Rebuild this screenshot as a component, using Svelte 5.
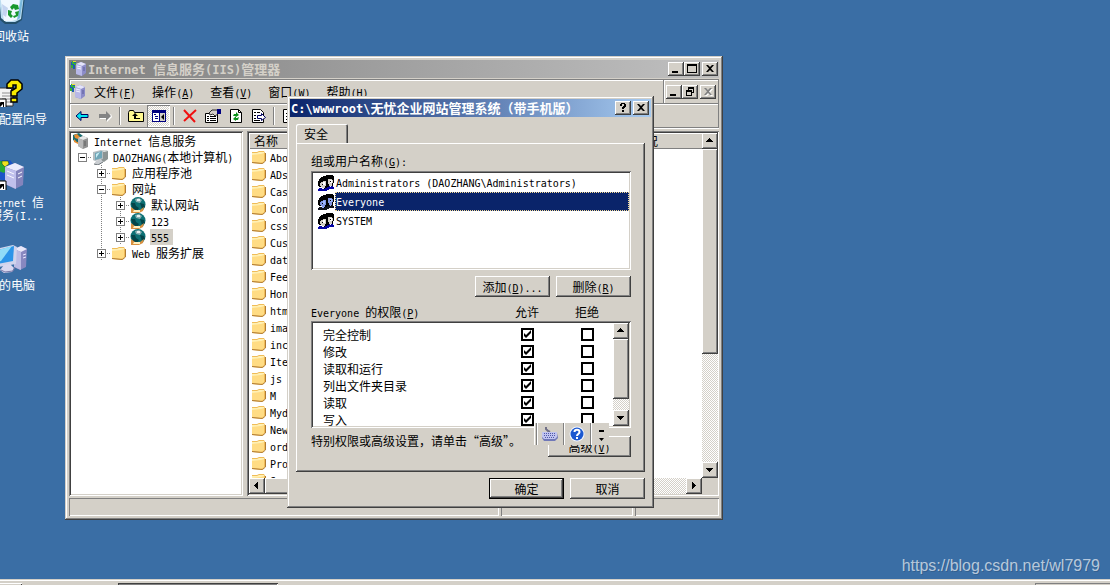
<script>
  const menus = ['文件(&F)', '操作(&A)', '查看(&V)', '窗口(&W)', '帮助(&H)'];
  const tools = ['back', 'forward', '|', 'up', 'tree', '|', 'delete', 'props', 'refresh', 'export', '|', 'help'];
  const tree = [
    { level: 0, icon: 'iis', name: 'Internet 信息服务' },
    { level: 1, icon: 'server', name: 'DAOZHANG(本地计算机)', sign: '-' },
    { level: 2, icon: 'folder', name: '应用程序池', sign: '+' },
    { level: 2, icon: 'folder', name: '网站', sign: '-' },
    { level: 3, icon: 'globe', name: '默认网站', sign: '+' },
    { level: 3, icon: 'globe', name: '123', sign: '+' },
    { level: 3, icon: 'globe', name: '555', sign: '+', selected: true },
    { level: 2, icon: 'folder', name: 'Web 服务扩展', sign: '+' }
  ];
  const files = ['Abo', 'ADs', 'Cas', 'Con', 'css', 'Cus', 'dat', 'Fee', 'Hon', 'htm', 'ima', 'inc', 'Ite', 'js', 'M', 'Myd', 'New', 'ord', 'Pro', 'S'];
  const users = ['Administrators (DAOZHANG\\Administrators)', 'Everyone', 'SYSTEM'];
  const shortcuts = [
    { icon: 'bin', lines: ['回收站'] },
    { icon: 'wizard', lines: ['安全配置向导'] },
    { icon: 'iisBig', lines: ['Internet 信', '息服务(I...'] },
    { icon: 'computer', lines: ['我的电脑'] }
  ];
  let selected = $state('Everyone');
  let perms = $state(
    ['完全控制', '修改', '读取和运行', '列出文件夹目录', '读取', '写入'].map((name) => ({ name, allow: true, deny: false }))
  );

  // Splits a label into Latin and Chinese runs; "&" marks the access key.
  function runs(text) {
    return (text.match(/&.|[\x20-\x25\x27-\x7e]+|[^\x20-\x7e]+/g) ?? []).map((s) => {
      if (s[0] === '&') return { s: s[1], kind: 'lat key' };
      return { s, kind: s.charCodeAt(0) < 127 ? 'lat' : 'han' };
    });
  }
</script>

{#snippet t(text)}<span class="t">{#each runs(text) as r}<span class={r.kind}>{r.s}</span>{/each}</span>{/snippet}

{#snippet boxServer()}
  <path d="M5 3l5-2 5 2v9l-4 3-6-2z" fill="#8c8cc8" />
  <path d="M5 3l5-2 5 2-4 2z" fill="#e4e4fa" />
  <path d="M5 3l6 2v10l-6-2z" fill="#b8b8e6" />
  <path d="M6 5l4 1M6 7l4 1" stroke="#f4f4ff" stroke-width="1" />
  <path d="M12 7h2M12 9h2" stroke="#5c5c9c" />
  <path d="M0 1h5v3H4v4H2V6H0z" fill="#1c5cb4" />
  <path d="M1 0h2v2h2v2H3V3H1zM0 4h2v3H0z" fill="#38b038" />
  <path d="M2 0h3v1H2z" fill="#f0dc30" />
{/snippet}

{#snippet icon(name)}
  {#if name === 'folder'}
    <svg class="i16" viewBox="0 0 16 16" aria-hidden="true">
      <path d="M1 3h5l2-1h5l1 2v8l-3 3-10-1z" fill="#f0bc58" />
      <path d="M1 4h5l2-1h5v9l-3 1-9-1z" fill="#fff0b4" />
      <path d="M1 6l9-1 3-1v8l-3 2-9-1z" fill="#ffdc84" />
      <path d="M14.500 4v8l-3 2.500L1 13.500" fill="none" stroke="#b07c34" />
    </svg>
  {:else if name === 'globe'}
    <svg class="i16" viewBox="0 0 16 16" aria-hidden="true">
      <circle cx="8" cy="7.500" r="7.500" fill="#0c7074" />
      <path d="M1 6h4l1 3 3 2-2 3-4-2zM10 6l4 1 1 3-3 2z" fill="#044448" />
      <path d="M5 2l4-1 3 2-2 3-4-1z" fill="#8cb0b4" />
      <path d="M7 2h3v2H7z" fill="#e4f0f0" />
      <path d="M1 10l4 3h5l4-3-1 4-4 2H1z" fill="#d89040" />
      <path d="M4 13h6v2H3z" fill="#fff0c0" />
    </svg>
  {:else if name === 'server'}
    <svg class="i16" viewBox="0 0 16 16" aria-hidden="true">
      <path d="M9 2l4-1 3 1v8l-4 3-3-1z" fill="#8c9494" />
      <path d="M9 2l4-1 3 1-4 1z" fill="#e0e4e4" />
      <path d="M1 3l8-2 2 1v8l-8 2-2-1z" fill="#b4bcc0" />
      <path d="M3 4l7-2v7l-7 2z" fill="#6ea6b8" />
      <path d="M4 5l4-2-4 6z" fill="#c8ecf4" />
      <path d="M4 12l5-2 2 3-5 3-4-1z" fill="#c8ccd0" />
      <path d="M2 15l4 1 5-3" fill="none" stroke="#6c7478" />
    </svg>
  {:else if name === 'iis'}
    <svg class="i16" viewBox="0 0 16 16" aria-hidden="true">
      <path d="M0 2l6-2 4 3-1 6-5 1-4-3z" fill="#186c70" />
      <path d="M1 2l3-1 3 3-2 2-3-1zM1 6l3 3h2l-1 2-4-2z" fill="#e88c30" />
      <path d="M5 5l5-2 5 2v9l-5 2-5-3z" fill="#909090" />
      <path d="M5 5l5-2 5 2-5 2z" fill="#e8e8e8" />
      <path d="M5 5l5 2v9l-5-3z" fill="#b8b8b8" />
      <path d="M12 8v5" stroke="#606060" />
    </svg>
  {:else if name === 'iisApp'}
    <svg class="i16" viewBox="0 0 16 16" aria-hidden="true">{@render boxServer()}</svg>
  {:else if name === 'users'}
    <svg class="i16" viewBox="0 0 16 16" aria-hidden="true">
      <path d="M3 2h2V1h3V0h7v1h1v7h-1v3h-2v2H9v1H4v-2H1v-1H0V6h1V4h1V3h1z" fill="#000" />
      <path d="M10 4h4v1h1v3h-1v3h-3V9h-1zM2 8h1V7h2V6h3v5H7v2H4v-1H3v-1H2z" fill="#d4d0c8" />
      <path d="M12 5h2v3h-2zM5 7h2v3H5z" fill="#fff" />
      <path d="M12 6h1v1h-1zM4 9h1v1H4zM8 6h1v5H8z" fill="#000" />
      <path d="M0 14h1v-1h3v1h3v-1h2v-1h2v-1h4v1h1v2h-5v1H9v1H0z" fill="#0404a4" />
      <path d="M4 13h2v1H4zM12 11h1v1h-1z" fill="#f4f4ff" />
    </svg>
  {:else if name === 'back'}
    <svg class="i16" viewBox="0 0 16 16" aria-hidden="true"><path d="M2 8l5-4.500V6.500h7v3H7v3z" fill="#00e4f0" stroke="#000060" /></svg>
  {:else if name === 'forward'}
    <svg class="i16" viewBox="0 0 16 16" aria-hidden="true"><path d="M15 9l-5 5v-3H3v-1h7l4-4z" fill="#fff" /><path d="M14 8L9 3v3H2v4h7v3z" fill="#848484" /></svg>
  {:else if name === 'up'}
    <svg class="i16" viewBox="0 0 16 16" aria-hidden="true"><path d="M.5 13.500v-9l1-2h4l1 2h9v9z" fill="#fff890" stroke="#000" /><path d="M4 8l3-3 3 3H8v2h4v1H6V8z" fill="#000" /></svg>
  {:else if name === 'tree'}
    <svg class="i16" viewBox="0 0 16 16" aria-hidden="true"><path d="M1 2h14v12H1z" fill="#000080" /><path d="M2 5h6v8H2z" fill="#fff" /><path d="M9 5h5v8H9z" fill="#d4d0c8" /><path d="M3 6h2v1H3zM4 8h3v1H4zM4 10h3v1H4z" fill="#000080" /><path d="M13 6v6l-3-3z" fill="#000" /></svg>
  {:else if name === 'delete'}
    <svg class="i16" viewBox="0 0 16 16" aria-hidden="true"><path d="M2 2l11 12M14 2L2 13" stroke="#f01010" stroke-width="2" fill="none" /></svg>
  {:else if name === 'props'}
    <svg class="i16" viewBox="0 0 16 16" aria-hidden="true"><path d="M.5 5.500h12v9H.5z" fill="#fff" stroke="#000" /><path d="M2 8h2v1H2zM5 8h6v1H5zM2 10h2v1H2zM5 10h6v1H5zM2 12h2v1H2zM5 12h6v1H5z" fill="#000" /><path d="M4 5l3-3h6v4l-3 2-2-2-3 1z" fill="#d4d0c8" stroke="#000" stroke-width=".8" /><path d="M12 1h4v5h-4z" fill="#000080" /></svg>
  {:else if name === 'refresh'}
    <svg class="i16" viewBox="0 0 16 16" aria-hidden="true"><path d="M2.500 1.500h8l3 3v10h-11z" fill="#fff" stroke="#000" /><path d="M10.500 1.500v3h3" fill="none" stroke="#000" /><path d="M5 8l1-2h2V4l3 3-3 2V8H7zM11 9l-1 3H8v1l-3-2 3-3v2h1z" fill="#089018" /></svg>
  {:else if name === 'export'}
    <svg class="i16" viewBox="0 0 16 16" aria-hidden="true"><path d="M1.500 1.500h8l3 3v10h-11z" fill="#fff" stroke="#000" /><path d="M3 4h2v1H3zM6 4h3v1H6zM3 7h2v1H3zM3 10h2v1H3zM3 12h6v1H3z" fill="#000" /><path d="M6.500 7.500h4v-2l4 4-4 3v-2h-4z" fill="#fff" stroke="#000060" /></svg>
  {:else if name === 'help'}
    <svg class="i16" viewBox="0 0 16 16" aria-hidden="true"><path d="M1.500 1.500h13v13h-13z" fill="#fff" stroke="#000" /><path d="M4 5h3v1H4zM4 8h3v1H4zM4 11h3v1H4z" fill="#000" /></svg>
  {:else if name === 'bin'}
    <svg class="i32" viewBox="0 0 32 32" aria-hidden="true">
      <path d="M3 4h27l-3 24-6 4H10l-5-4z" fill="#24506c" />
      <path d="M4 3h25l-3 24-6 3h-9l-5-4z" fill="#bcdcf0" />
      <path d="M5 3l8 5 12-5-2 24-6 2H9z" fill="#f0f8ff" />
      <path d="M7 12l6 4-2 9-3-2z" fill="#c4d4f0" />
      <path d="M26 6h2l-3 20-3 2z" fill="#78b8dc" />
      <path d="M15 15l3-3 5 1 1 4-4 1-1-2-2 2zM24 19l-1 5-4 2-1-2 3-1-1-3zM13 18l4 1-1 3 2 2-2 2-3-3z" fill="#18982c" />
    </svg>
  {:else if name === 'wizard'}
    <svg class="i32" viewBox="0 0 32 32" aria-hidden="true">
      <path d="M2 13h13l3 3v15H2z" fill="#f4f4f4" stroke="#303030" />
      <path d="M7 18h9M7 21h9M7 24h9M7 27h9" stroke="#909090" />
      <path d="M12 13V9l4-4h7l4 4v5l-5 4v3h-6v-5l5-3v-3h-3v3zM16 23h6v4h-6z" fill="#f8ec00" stroke="#000" stroke-width="1.500" />
      <path d="M0 24h11v11H0z" fill="#fff" stroke="#000" /><path d="M5 32v-3H2l4-2h3v5H8v-3z" fill="#000" />
    </svg>
  {:else if name === 'iisBig'}
    <svg class="i32" viewBox="0 0 32 32" aria-hidden="true">
      <path d="M1 4l7-2h7l3 4v12l-6 5-9-2z" fill="#1c54c8" />
      <path d="M4 3h5v4l4 3-4 5-5-2zM12 12l4 2-3 5z" fill="#28a838" /><path d="M7 3h6l1 3-4 3-3-3z" fill="#f0e020" stroke="#205020" stroke-width=".6" />
      <path d="M10 9l10-4 9 4-1 18-8 4-10-5z" fill="#8484bc" />
      <path d="M10 9l10-4 9 4-8 4z" fill="#ececfc" />
      <path d="M10 9l11 4v18l-11-5z" fill="#c0c0ec" />
      <path d="M12 13l7 3M12 17l7 3M23 16l4-2M23 20l4-2" stroke="#f8f8ff" />
      <path d="M0 23h11v11H0z" fill="#fff" stroke="#000" /><path d="M5 31v-3H2l4-2h3v5H8v-3z" fill="#000" />
    </svg>
  {:else if name === 'computer'}
    <svg class="i32" viewBox="0 0 32 32" aria-hidden="true">
      <path d="M19 8l7-3 6 3-1 18-6 3-6-3z" fill="#8888c0" />
      <path d="M19 8l7-3 6 3-6 3z" fill="#e8e8fa" />
      <path d="M19 8l7 3v18l-7-3z" fill="#bcbce4" /><path d="M28 14l3-1M28 17l3-1" stroke="#e8e8ff" />
      <path d="M1 8l17-4 4 2-1 17-18 3z" fill="#d0d4ec" />
      <path d="M3 9l16-4-1 15-15 3z" fill="#2c94e8" />
      <path d="M3 9l14-4L6 20l-3 1z" fill="#90dcf8" />
      <path d="M9 24l6-1 4 4-2 4-8 1-4-3z" fill="#d8d8f0" /><path d="M6 29l4 2 8-1 2-4" fill="none" stroke="#7878a8" />
    </svg>
  {/if}
{/snippet}

{#snippet glyph(kind)}
  <svg class="glyph" viewBox="0 0 12 10" aria-hidden="true">
    {#if kind === 'min'}<path d="M2 7h6v2H2z" />
    {:else if kind === 'max'}<path d="M1 0h10v9H1zM2 2v6h8V2z" fill-rule="evenodd" />
    {:else if kind === 'restore'}<path d="M4 0h6v6H8v3H2V3h2zM5 2v1h3v2h1V2zM3 5v3h4V5z" fill-rule="evenodd" />
    {:else if kind === 'close'}<path d="M2 1h2l2 2 2-2h2L7 4.500 10 8H8L6 6 4 8H2l3-3.500z" />
    {:else if kind === 'off'}<path d="M3 2h2l2 2 2-2h2L8 5.500 11 9H9L7 7 5 9H3l3-3.500z" fill="#fff" /><path d="M2 1h2l2 2 2-2h2L7 4.500 10 8H8L6 6 4 8H2l3-3.500z" fill="#808080" />
    {:else if kind === 'ask'}<path d="M3 1h1V0h4v1h1v3H8v1H7v1H5V4h1V3h1V1H5v2H3zM5 7h2v2H5z" />
    {/if}
  </svg>
{/snippet}

{#snippet arrow(dir)}
  <button class="raised arrow" type="button" aria-label={dir}>
    <svg viewBox="0 0 16 16" aria-hidden="true">
      {#if dir === 'up'}<path d="M4 9h7v-1h-1v-1H9V6H8V5H7v1H6v1H5v1H4z" />
      {:else if dir === 'down'}<path d="M4 6h7v1h-1v1H9v1H8v1H7V9H6V8H5V7H4z" />
      {:else if dir === 'left'}<path d="M9 4v7H8v-1H7V9H6V8H5V7h1V6h1V5h1V4z" />
      {:else}<path d="M6 4v7h1v-1h1V9h1V8h1V7H9V6H8V5H7V4z" />{/if}
    </svg>
  </button>
{/snippet}

<div class="screen">
  <main class="desktop">
    <nav class="shortcuts">
      {#each shortcuts as s}
        <a class="shortcut" href="#desktop">
          {@render icon(s.icon)}
          <span class="caption">{#each s.lines as line}{@render t(line)}{/each}</span>
        </a>
      {/each}
    </nav>

    <section class="window console">
      <header class="title dim">
        {@render icon('iisApp')}
        <h1>{@render t('Internet 信息服务(IIS)管理器')}</h1>
        <button class="raised cap" type="button" aria-label="最小化">{@render glyph('min')}</button>
        <button class="raised cap" type="button" aria-label="最大化">{@render glyph('max')}</button>
        <button class="raised cap last" type="button" aria-label="关闭">{@render glyph('close')}</button>
      </header>

      <div class="bars">
        <div class="band">
          <div class="menu">
            {@render icon('iisApp')}
            {#each menus as m}<button class="item" type="button">{@render t(m)}</button>{/each}
          </div>
          <div class="mdi">
            <button class="raised cap" type="button" aria-label="最小化">{@render glyph('min')}</button>
            <button class="raised cap" type="button" aria-label="还原">{@render glyph('restore')}</button>
            <button class="raised cap last" type="button" aria-label="关闭" disabled>{@render glyph('off')}</button>
          </div>
        </div>
        <div class="band tools">
          {#each tools as name}
            {#if name === '|'}<span class="sep"></span>
            {:else}<button class="tool" class:down={name === 'tree'} type="button" aria-label={name}>{@render icon(name)}</button>{/if}
          {/each}
        </div>
      </div>

      <div class="panes">
        <ul class="sunken tree">
          {#each tree as n}
            <li class={['node', 'l' + n.level]}>
              {#if n.sign}<span class="twig"><button class="sign" class:plus={n.sign === '+'} type="button" aria-label={n.name}></button></span>{/if}
              {@render icon(n.icon)}
              <span class="name" class:sel={n.selected}>{@render t(n.name)}</span>
            </li>
          {/each}
        </ul>
        <div class="sunken list">
          <div class="view">
            <table>
              <thead><tr><th>{@render t('名称')}</th><th>{@render t('状况')}</th></tr></thead>
              <tbody>
                {#each files as f}<tr><td>{@render icon('folder')}{@render t(f)}</td></tr>{/each}
              </tbody>
            </table>
          </div>
          <div class="vbar">{@render arrow('up')}<span class="raised thumb tall"></span><span class="rest"></span>{@render arrow('down')}</div>
          <div class="hbar">{@render arrow('left')}<span class="raised thumb wide"></span><span class="rest"></span>{@render arrow('right')}</div>
          <span class="corner"></span>
        </div>
      </div>

      <footer class="status"><span></span><span></span><span></span></footer>
    </section>

    <section class="window dialog">
      <header class="title">
        <h2>{@render t('C:\\wwwroot\\无忧企业网站管理系统（带手机版）')}</h2>
        <button class="raised cap" type="button" aria-label="帮助">{@render glyph('ask')}</button>
        <button class="raised cap last" type="button" aria-label="关闭">{@render glyph('close')}</button>
      </header>
      <div class="body">
        <button class="tab" type="button">{@render t('安全')}</button>
        <div class="page">
          <span class="label" id="users">{@render t('组或用户名称(&G):')}</span>
          <ul class="sunken users" role="listbox" aria-labelledby="users">
            {#each users as u}
              <li role="option" aria-selected={selected === u} class:on={selected === u}>
                <button type="button" onclick={() => (selected = u)}>{@render icon('users')}<span class="who">{@render t(u)}</span></button>
              </li>
            {/each}
          </ul>
          <div class="actions">
            <button class="raised push" type="button">{@render t('添加(&D)...')}</button>
            <button class="raised push" type="button">{@render t('删除(&R)')}</button>
          </div>
          <div class="heads" id="perms">
            <span>{@render t('Everyone 的权限(&P)')}</span>
            <span class="col">{@render t('允许')}</span>
            <span class="col">{@render t('拒绝')}</span>
          </div>
          <div class="sunken perms">
            <table aria-labelledby="perms">
              <tbody>
                {#each perms as p}
                  <tr>
                    <th scope="row">{@render t(p.name)}</th>
                    <td><input type="checkbox" aria-label={p.name + ' 允许'} bind:checked={p.allow} /></td>
                    <td><input type="checkbox" aria-label={p.name + ' 拒绝'} bind:checked={p.deny} /></td>
                  </tr>
                {/each}
              </tbody>
            </table>
            <div class="vbar">{@render arrow('up')}<span class="raised thumb short"></span><span class="rest"></span>{@render arrow('down')}</div>
          </div>
          <div class="more">
            <span>{@render t('特别权限或高级设置，请单击“高级”。')}</span>
            <button class="raised push" type="button">{@render t('高级(&V)')}</button>
          </div>
        </div>
        <div class="answer">
          <button class="raised push default" type="button">{@render t('确定')}</button>
          <button class="raised push" type="button">{@render t('取消')}</button>
        </div>
      </div>
    </section>

    <div class="langbar">
      <button type="button" aria-label="键盘">
        <svg class="i20" viewBox="0 0 20 20" aria-hidden="true">
          <path d="M6 3v2l2 2 2 1" fill="none" stroke="#707088" stroke-width="2" />
          <path d="M2 9h15l1 5-3 3H4l-2-3z" fill="#7078b8" />
          <path d="M2 8h15v5l-2 2H4l-2-2z" fill="#c0c4f0" />
          <path d="M4 9.500h12M4 11.500h12M5 13.500h10" stroke="#5058a8" stroke-dasharray="1 1" />
        </svg>
      </button>
      <button type="button" aria-label="帮助">
        <svg class="i20" viewBox="0 0 20 20" aria-hidden="true">
          <circle cx="10" cy="10" r="7.500" fill="#f4f8ff" /><circle cx="10" cy="10" r="6.500" fill="#1c58d0" />
          <path d="M7.500 8c0-3 5-3 5 0 0 2-2.500 2-2.500 4" fill="none" stroke="#fff" stroke-width="2" /><path d="M9 13h2v2H9z" fill="#fff" />
        </svg>
      </button>
      <button class="grip" type="button" aria-label="选项">
        <svg class="i20" viewBox="0 0 20 20" aria-hidden="true"><path d="M8 6h5v2H8zM8 14h5l-2.500 3z" /></svg>
      </button>
    </div>

    <p class="mark">https://blog.csdn.net/wl7979</p>
  </main>

  <footer class="taskbar">
    <span class="start"></span>
    <span class="task"></span>
    <span class="tray"></span>
  </footer>
</div>

<style>
  :global(body) { background: #3a6ea5; }
  * { box-sizing: border-box; }
  .screen {
    display: flex; flex-direction: column; height: 100vh; overflow: hidden;
    font: 12px/16px "Noto Sans CJK SC", sans-serif; color: #000;
    --face: #d4d0c8; --dither: repeating-conic-gradient(#fff 0 25%, #d4d0c8 0 50%) 0 0 / 2px 2px;
  }
  button { font: inherit; color: inherit; border: 0; padding: 0; margin: 0; background: none; }
  ul { list-style: none; margin: 0; padding: 0; }
  h1, h2, p { margin: 0; font: inherit; }
  table { border-collapse: collapse; }
  th, td { padding: 0; font-weight: normal; text-align: left; }
  svg { display: block; flex: none; }
  .t { white-space: pre; }
  .lat { font-family: "DejaVu Sans Mono", monospace; font-size: 10px; line-height: 10px; }
  .key { text-decoration: underline; }
  .i16 { width: 16px; height: 16px; }
  .i20 { width: 20px; height: 20px; }
  .i32 { width: 32px; height: 32px; }

  .desktop { position: relative; flex: 1; overflow: hidden; background: #3a6ea5; }
  .shortcuts { position: absolute; left: -27px; top: -8px; width: 76px; display: grid; grid-auto-rows: 83px; }
  .shortcut { display: flex; flex-direction: column; align-items: center; gap: 6px; color: #fff; text-decoration: none; }
  .caption { display: flex; flex-direction: column; line-height: 12px; }

  .window {
    position: absolute; display: flex; flex-direction: column; background: var(--face);
    box-shadow: inset -1px -1px #404040, inset 1px 1px #d4d0c8, inset -2px -2px #808080, inset 2px 2px #fff;
  }
  .console { left: 65px; top: 56px; width: 658px; height: 464px; padding: 4px; }
  .dialog { left: 287px; top: 96px; width: 367px; padding: 3px; }
  .raised { background: var(--face); box-shadow: inset -1px -1px #404040, inset 1px 1px #fff, inset -2px -2px #808080; }
  .sunken { background: #fff; padding: 2px; box-shadow: inset 1px 1px #808080, inset -1px -1px #fff, inset 2px 2px #404040, inset -2px -2px #d4d0c8; }

  .title { display: flex; align-items: center; height: 18px; padding: 0 2px 0 1px; background: linear-gradient(90deg, #0a246a, #a6caf0); color: #fff; font-size: 13px; font-weight: bold; }
  .title.dim { padding: 0 1px 0 2px; background: linear-gradient(90deg, #808080, #c0c0c0); color: var(--face); }
  .title h1, .title h2 { flex: 1; }
  .title h1 { padding-left: 1px; }
  .title .lat { font-size: 12px; }
  .cap { display: grid; place-items: center; width: 16px; height: 14px; }
  .cap.last { margin-left: 2px; }
  .glyph { width: 12px; height: 10px; }

  .bars { margin: 1px 0 3px; border: 1px solid #808080; box-shadow: 0 1px #fff; }
  .band { display: flex; height: 23px; box-shadow: inset 1px 1px #fff; }
  .menu { display: flex; flex: 1; align-items: center; }
  .item { padding: 0 8px; }
  .mdi { display: flex; align-items: center; padding: 0 2px; border-left: 1px solid #808080; box-shadow: inset 1px 1px #fff; }
  .tools { height: 24px; align-items: center; border-top: 1px solid #808080; }
  .tool { display: grid; place-items: center; width: 23px; height: 22px; }
  .tool.down { background: var(--dither); box-shadow: inset 1px 1px #808080, inset -1px -1px #fff; }
  .sep { width: 8px; height: 18px; background: linear-gradient(90deg, #808080 1px, #fff 1px) 3px 0 / 2px 100% no-repeat; }

  .panes { display: flex; flex: 1; gap: 4px; min-height: 0; }
  .tree { width: 174px; }
  .node { display: flex; align-items: center; height: 16px; padding-left: 2px; }
  .l1 { padding-left: 7px; }
  .l2 { padding-left: 26px; }
  .l3 { padding-left: 45px; }
  .l2, .l3 { background: repeating-linear-gradient(#808080 0 1px, #fff 1px 2px) 30px 0 / 1px 100% no-repeat; }
  .l3 { background: repeating-linear-gradient(#808080 0 1px, #fff 1px 2px) 30px 0 / 1px 100% no-repeat, repeating-linear-gradient(#808080 0 1px, #fff 1px 2px) 49px 0 / 1px 100% no-repeat; }
  .twig { display: flex; width: 14px; background: repeating-linear-gradient(90deg, #808080 0 1px, #fff 1px 2px) 0 4px / 100% 1px no-repeat; }
  .sign { width: 9px; height: 9px; border: 1px solid #808080; background: linear-gradient(#000, #000) 1px 3px / 5px 1px no-repeat, #fff; }
  .sign.plus { background: linear-gradient(#000, #000) 1px 3px / 5px 1px no-repeat, linear-gradient(#000, #000) 3px 1px / 1px 5px no-repeat, #fff; }
  .name { margin-left: 4px; padding: 0 1px; }
  .name.sel { background: var(--face); padding-right: 4px; }

  .list { flex: 1; display: grid; grid-template: minmax(0, 1fr) 16px / minmax(0, 1fr) 16px; min-width: 0; padding-right: 1px; }
  .view { overflow: hidden; }
  .view table { width: 100%; }
  .view tr { display: flex; }
  .view th { height: 16px; width: 380px; padding-left: 5px; background: var(--face); box-shadow: inset 1px 1px #fff, inset -1px -1px #808080; }
  .view th:last-child { flex: 1; }
  .view td { display: flex; align-items: center; gap: 3px; height: 17px; padding: 0 0 1px 2px; }
  .arrow { flex: none; width: 16px; height: 16px; }
  .arrow svg { width: 16px; height: 16px; }
  .vbar { display: flex; flex-direction: column; width: 16px; }
  .hbar { display: flex; height: 16px; }
  .rest { flex: 1; background: var(--dither); }
  .thumb.tall { height: 205px; }
  .thumb.short { height: 60px; }
  .thumb.wide { width: 300px; }
  .corner { background: var(--face); }

  .status { display: flex; gap: 2px; height: 18px; margin-top: 2px; }
  .status span { box-shadow: inset 1px 1px #808080, inset -1px -1px #fff; }
  .status span:nth-child(1) { flex: 1; }
  .status span:nth-child(2) { width: 132px; }
  .status span:nth-child(3) { width: 84px; }

  .body { padding: 7px 6px 6px; }
  .tab { display: block; width: 52px; height: 19px; border-radius: 2px 2px 0 0; padding-left: 8px; text-align: left; box-shadow: inset 1px 1px #fff, inset -1px 0 #404040, inset -2px 0 #808080; }
  .page { display: flex; flex-direction: column; padding: 10px 14px 15px 15px; box-shadow: inset -1px -1px #404040, inset 1px 1px #fff, inset -2px -2px #808080; }
  .label { height: 16px; margin-bottom: 2px; }
  .users { height: 99px; }
  .users button { display: flex; align-items: center; width: 100%; height: 19px; padding-left: 5px; text-align: left; }
  .who { flex: 1; height: 19px; margin-left: 1px; padding: 0 1px; line-height: 18px; }
  .users .on .who { background: #0a246a; color: #fff; outline: 1px dotted #f5db95; outline-offset: -1px; }
  .users .on :global(.i16) { filter: brightness(0.6) sepia(1) hue-rotate(190deg) saturate(2); }
  .actions, .answer { display: flex; justify-content: flex-end; gap: 6px; margin-top: 6px; }
  .push { width: 75px; height: 21px; }
  .default { box-shadow: inset 0 0 0 1px #000, inset -2px -2px #404040, inset 2px 2px #fff, inset -3px -3px #808080; }
  .heads { display: flex; height: 16px; margin: 7px 14px 1px 0; }
  .heads span:first-child { flex: 1; }
  .heads .col { width: 60px; text-align: center; }
  .perms { display: flex; height: 107px; overflow: hidden; }
  .perms table { flex: 1; align-self: flex-start; margin-top: 3px; }
  .perms tr { height: 17px; }
  .perms th { height: 17px; padding-left: 10px; line-height: 16px; }
  .perms td { width: 60px; padding-left: 0; }
  .perms td:last-child { width: 32px; }
  input { appearance: none; display: block; width: 13px; height: 13px; margin: 0; border: 2px solid #000; background: #fff; }
  input:checked::before { content: ""; display: block; width: 9px; height: 9px; background: #000; clip-path: polygon(1px 3px, 3px 5px, 8px 0, 8px 3px, 3px 8px, 1px 6px); }
  .more { display: flex; height: 24px; margin-top: 5px; }
  .more span:first-child { flex: 1; }
  .more .push { width: 83px; align-self: flex-end; }

  .langbar { position: absolute; left: 534px; top: 423px; display: flex; height: 22px; padding-left: 2px; background: var(--face); box-shadow: inset 1px 0 #fff; }
  .langbar button { display: grid; place-items: center; width: 27px; height: 22px; border-left: 1px solid #808080; box-shadow: inset 1px 0 #fff; }
  .langbar .grip { width: 19px; }

  .mark { position: absolute; right: 10px; bottom: 3px; font: 16px/20px "Liberation Sans", Arial, sans-serif; color: rgba(255, 255, 255, 0.65); text-shadow: 1px 1px rgba(0, 0, 0, 0.15); }

  .taskbar { display: flex; height: 6px; padding-top: 4px; background: var(--face); box-shadow: inset 0 1px #d4d0c8, inset 0 2px #fff; overflow: hidden; }
  .start { width: 22px; box-shadow: inset 0 1px #fff, inset -1px 0 #404040; }
  .task { width: 160px; margin-left: 96px; background: #808080; box-shadow: inset 1px 1px #404040, inset -1px 0 #fff; }
  .tray { width: 75px; margin-left: auto; box-shadow: inset 1px 1px #808080; }
</style>
